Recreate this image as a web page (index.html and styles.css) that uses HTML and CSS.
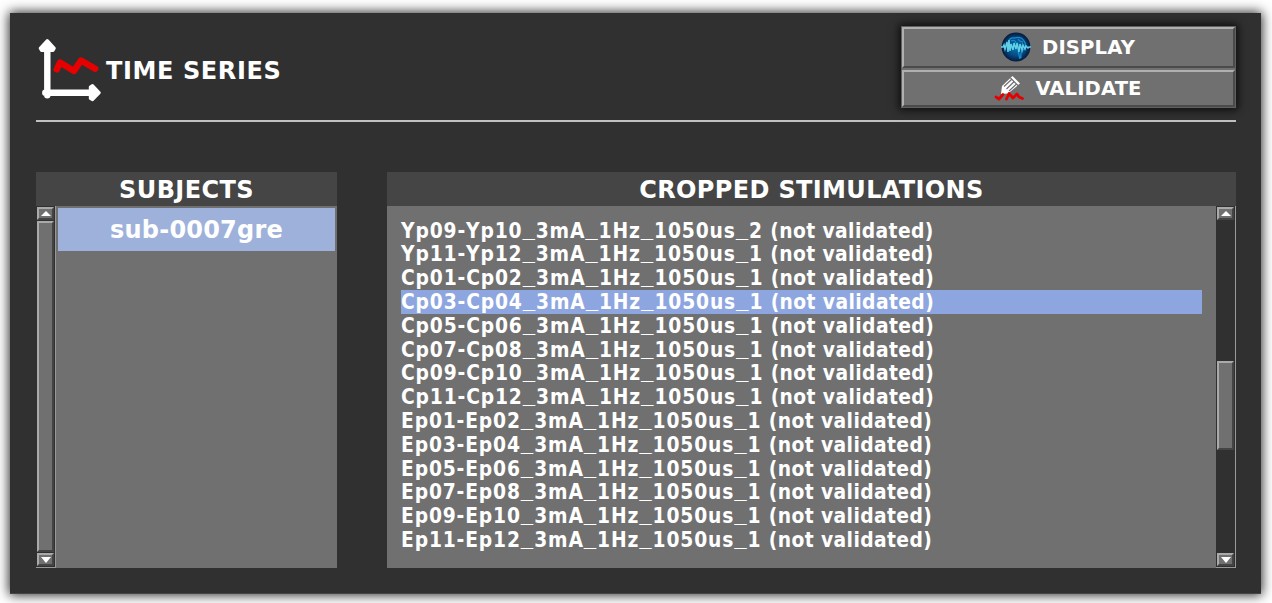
FILE: index.html
```html
<!DOCTYPE html>
<html lang="en">
<head>
<meta charset="utf-8">
<title>Time series</title>
<link rel="stylesheet" href="styles.css">
</head>
<body>
<main class="window">
  <header class="header">
    <div class="brand">
      <svg class="brand-icon" width="66" height="66" viewBox="0 0 66 66">
        <path d="M11.3 8V58.3M9.3 55.7H58" fill="none" stroke="#fff" stroke-width="6.4" stroke-linecap="round"/>
        <path d="M11.3 3.5L18.3 11.3L17 13.5H5.5L4.2 11.3ZM63.3 55.7L56.5 62.7L54.3 61.5V50L56.5 48.6Z" fill="#fff" stroke="#fff" stroke-width="3" stroke-linejoin="round"/>
        <path d="M20.8 32.3L24 25.5L38 33.9L45 23.5L59.2 31.7" fill="none" stroke="#e60000" stroke-width="6.4" stroke-linejoin="round" stroke-linecap="round"/>
      </svg>
      <h1 class="title">TIME SERIES</h1>
    </div>
    <div class="actions">
      <button class="action">
        <svg width="30" height="30" viewBox="0 0 30 30">
          <defs><radialGradient id="globe"><stop offset="0" stop-color="#0a78ae"/><stop offset=".6" stop-color="#064b86"/><stop offset="1" stop-color="#071a3b"/></radialGradient></defs>
          <circle cx="15" cy="15" r="14.4" fill="url(#globe)"/>
          <path d="M7 11Q8 5 14 6Q20 4 23 9Q26 13 23 17Q19 20 20 26M10 9Q14 7 15 11M17 7Q19 10 22 10M17 19L19 27" fill="none" stroke="#168ccc" stroke-width="1.3"/>
          <path d="M0 15H2L3 13L4 17L6 10L7 20L8 8L9 19L10 12L12 18L13 11L15 17L16 11L18 20L19 12L21 18L22 13L24 17L25 14L27 16L28 15H30" fill="none" stroke="#5fd0e6" stroke-width="1.5"/>
        </svg>
        <span class="label-display">DISPLAY</span>
      </button>
      <button class="action action-validate">
        <svg width="30" height="28" viewBox="0 0 30 28">
          <path d="M8 12L18.5 2L26 9.5L14 19.5L7 20Z" fill="#fff"/>
          <path d="M10 12.5L17.5 5.5M12.5 15L20 7.8M15 17L22.5 10M16.5 4L24 11.5" fill="none" stroke="#707070" stroke-width="1.2"/>
          <path d="M2 23L5 25L9 20.5M12.5 25L15 19.5L19 24L23 20L25 23L28.5 24.5" fill="none" stroke="#e60000" stroke-width="2.8" stroke-linejoin="round" stroke-linecap="round"/>
        </svg>
        <span class="label-validate">VALIDATE</span>
      </button>
    </div>
  </header>
  <div class="columns">
    <section class="panel subjects">
      <h2 class="panel-title"><span class="t-subjects">SUBJECTS</span></h2>
      <div class="panel-body">
        <div class="scroll scroll-left">
          <div class="arrow"><svg width="10" height="5"><path d="M5 0L10 5H0Z"/></svg></div>
          <div class="thumb thumb-full"></div>
          <div class="arrow"><svg width="10" height="6"><path d="M0 0H10L5 6Z"/></svg></div>
        </div>
        <div class="subject-list"><div class="subject">sub-0007gre</div></div>
      </div>
    </section>
    <section class="panel stimulations">
      <h2 class="panel-title"><span class="t-stims">CROPPED STIMULATIONS</span></h2>
      <div class="panel-body">
        <ul class="rows">
          <li>Yp09-Yp10<i>_</i>3mA<i>_</i>1Hz<i>_</i>1050us<i>_</i>2 <span class="state">(not validated)</span></li>
          <li>Yp11-Yp12<i>_</i>3mA<i>_</i>1Hz<i>_</i>1050us<i>_</i>1 <span class="state">(not validated)</span></li>
          <li>Cp01-Cp02<i>_</i>3mA<i>_</i>1Hz<i>_</i>1050us<i>_</i>1 <span class="state">(not validated)</span></li>
          <li class="selected">Cp03-Cp04<i>_</i>3mA<i>_</i>1Hz<i>_</i>1050us<i>_</i>1 <span class="state">(not validated)</span></li>
          <li>Cp05-Cp06<i>_</i>3mA<i>_</i>1Hz<i>_</i>1050us<i>_</i>1 <span class="state">(not validated)</span></li>
          <li>Cp07-Cp08<i>_</i>3mA<i>_</i>1Hz<i>_</i>1050us<i>_</i>1 <span class="state">(not validated)</span></li>
          <li>Cp09-Cp10<i>_</i>3mA<i>_</i>1Hz<i>_</i>1050us<i>_</i>1 <span class="state">(not validated)</span></li>
          <li>Cp11-Cp12<i>_</i>3mA<i>_</i>1Hz<i>_</i>1050us<i>_</i>1 <span class="state">(not validated)</span></li>
          <li>Ep01-Ep02<i>_</i>3mA<i>_</i>1Hz<i>_</i>1050us<i>_</i>1 <span class="state">(not validated)</span></li>
          <li>Ep03-Ep04<i>_</i>3mA<i>_</i>1Hz<i>_</i>1050us<i>_</i>1 <span class="state">(not validated)</span></li>
          <li>Ep05-Ep06<i>_</i>3mA<i>_</i>1Hz<i>_</i>1050us<i>_</i>1 <span class="state">(not validated)</span></li>
          <li>Ep07-Ep08<i>_</i>3mA<i>_</i>1Hz<i>_</i>1050us<i>_</i>1 <span class="state">(not validated)</span></li>
          <li>Ep09-Ep10<i>_</i>3mA<i>_</i>1Hz<i>_</i>1050us<i>_</i>1 <span class="state">(not validated)</span></li>
          <li>Ep11-Ep12<i>_</i>3mA<i>_</i>1Hz<i>_</i>1050us<i>_</i>1 <span class="state">(not validated)</span></li>
        </ul>
        <div class="scroll scroll-right">
          <div class="arrow"><svg width="10" height="5"><path d="M5 0L10 5H0Z"/></svg></div>
          <div class="track"><div class="thumb thumb-part"></div></div>
          <div class="arrow"><svg width="10" height="6"><path d="M0 0H10L5 6Z"/></svg></div>
        </div>
      </div>
    </section>
  </div>
</main>
</body>
</html>
```
FILE: styles.css
```css
* { box-sizing: border-box; }
body {
  margin: 0;
  height: 603px;
  padding: 13px 11px 9px 10px;
  overflow: hidden;
  background: #fff;
  color: #fff;
  font-family: "DejaVu Sans", Verdana, sans-serif;
  font-weight: bold;
}
.window {
  height: 581px;
  padding: 13px 25px 26px 26px;
  background: #303030;
  border-bottom: 1px solid #454545;
  box-shadow: 0 0 11px 1px rgba(0, 0, 0, .85);
}
.header {
  display: flex;
  justify-content: space-between;
  height: 96px;
  border-bottom: 2px solid #c0c0c0;
}
.brand { display: flex; padding-top: 11px; }
.brand-icon { flex: none; }
.title {
  margin: 19px 0 0 4px;
  font-size: 24px;
  line-height: 30px;
  letter-spacing: .6px;
  white-space: nowrap;
}
.actions {
  width: 335px;
  height: 82px;
  background: #707070;
  border: 1px solid #606060;
  box-shadow: 0 0 8px 2px rgba(0, 0, 0, .75);
}
.action {
  display: flex;
  align-items: center;
  justify-content: center;
  gap: 11px;
  width: 333px;
  height: 41px;
  padding: 0 1px 1px 0;
  border: 2px solid;
  border-color: #b0b0b0 #4b4b4b #4b4b4b #b0b0b0;
  background: #707070;
  color: #fff;
  font: bold 19.6px/24px "DejaVu Sans", Verdana, sans-serif;
}
.action span { padding-top: 2px; }
.action-validate { height: 37px; margin-top: 2px; }
.label-display { letter-spacing: .15px; }
.label-validate { letter-spacing: .1px; }
.columns { display: flex; gap: 50px; margin-top: 50px; }
.subjects { width: 301px; }
.stimulations { width: 849px; }
.panel-title {
  height: 34px;
  margin: 0;
  background: #454545;
  font-size: 24px;
  line-height: 36px;
  text-align: center;
  white-space: nowrap;
}
.t-subjects { letter-spacing: .4px; }
.t-stims { letter-spacing: .35px; }
.panel-body { display: flex; height: 362px; background: #707070; }
.scroll {
  display: flex;
  flex-direction: column;
  flex: none;
  width: 20px;
  height: 362px;
  padding: 1px;
  background: #303030;
  border-right: 1px solid #999;
  border-bottom: 1px solid #999;
}
.arrow, .thumb {
  border: 2px solid;
  border-color: #aaa #444 #444 #aaa;
  background: #707070;
}
.arrow {
  display: flex;
  align-items: center;
  justify-content: center;
  flex: none;
  height: 13px;
}
.arrow svg { fill: #fff; flex: none; }
.thumb-full { flex: 1; margin: 1px 0; }
.track { flex: 1; padding-top: 141px; }
.thumb-part { height: 89px; }
.subject-list { flex: 1; padding: 2px 2px 0; }
.subject {
  height: 43px;
  background: #9eb1da;
  font-size: 24px;
  line-height: 44px;
  letter-spacing: .2px;
  text-align: center;
}
.rows {
  flex: 1;
  margin: 0;
  padding: 12.7px 14px 0 14px;
  list-style: none;
  font-size: 20.8px;
  font-stretch: condensed;
  font-kerning: none;
  letter-spacing: .85px;
  line-height: 25.6px;
  white-space: nowrap;
}
.rows li { height: 23.8px; }
.rows i {
  font-family: "Liberation Mono", monospace;
  font-style: normal;
  line-height: 1;
}
.state { letter-spacing: .4px; }
.selected { background: #8ea6e0; }
```
